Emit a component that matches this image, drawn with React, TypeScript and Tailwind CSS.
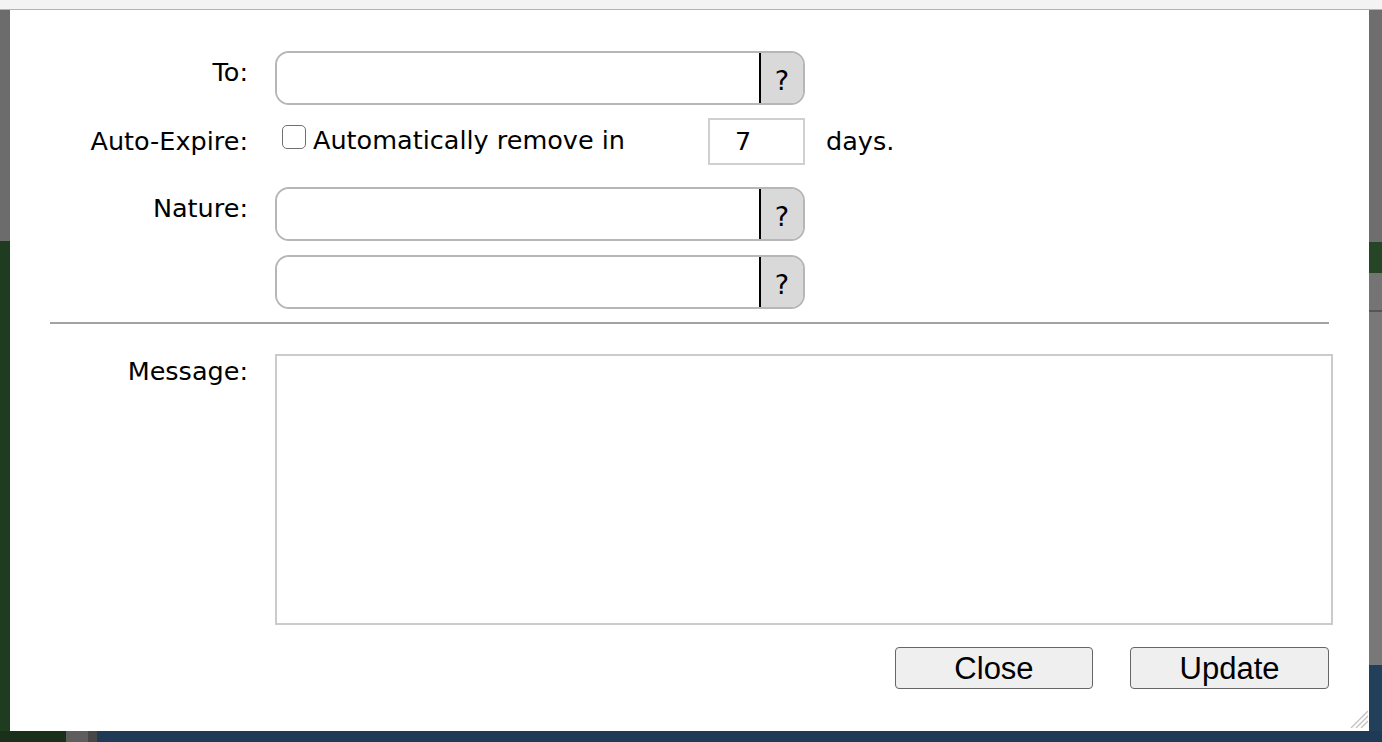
import React from "react";

const font = { fontFamily: '"DejaVu Sans", "Noto Sans", sans-serif' };

function Label({ text, mt }: { text: string; mt: string }) {
  return (
    <div
      className={`w-[238px] shrink-0 text-right text-[25.5px] leading-[30px] text-black ${mt}`}
      style={font}
    >
      {text}
    </div>
  );
}

function LookupField() {
  return (
    <div className="ml-[27px] flex h-[54px] w-[530px] overflow-hidden rounded-[14px] border-2 border-[#b6b6b6] bg-white">
      <div className="flex-1 bg-white" />
      <div
        className="flex w-[44px] items-center justify-center border-l-2 border-black bg-[#d9d9d9] pt-[4px] text-[27px] leading-none text-black"
        style={font}
      >
        ?
      </div>
    </div>
  );
}

export default function App() {
  return (
    <div className="flex h-[742px] w-[1382px] flex-col overflow-hidden bg-white">
      {/* top strip of the page behind */}
      <div className="h-[10px] shrink-0 border-b border-[#b3b3b3] bg-[#f3f3f3]" />

      <div className="flex h-[721px] shrink-0">
        {/* left edge of the page behind */}
        <div className="flex w-[10px] shrink-0 flex-col">
          <div className="h-[231px] bg-[#6c6c6c]" />
          <div className="flex-1 bg-[#203c20]" />
        </div>

        {/* dialog */}
        <div className="relative flex w-[1359px] shrink-0 flex-col bg-white pt-[41px]">
          {/* To */}
          <div className="flex h-[54px] items-start">
            <Label text="To:" mt="mt-[6px]" />
            <LookupField />
          </div>

          {/* Auto-Expire */}
          <div className="mt-[13px] flex h-[47px] items-start">
            <Label text="Auto-Expire:" mt="mt-[8px]" />
            <div className="ml-[27px] flex w-[433px] items-start">
              <div className="ml-[7px] mt-[7px] h-[24px] w-[24px] rounded-[5px] border-[1.5px] border-[#707070] bg-white" />
              <span
                className="ml-[7px] mt-[7px] text-[25.5px] leading-[30px] text-black"
                style={font}
              >
                Automatically remove in
              </span>
            </div>
            <div
              className="h-[47px] w-[97px] border-2 border-[#d0d0d0] pl-[25px] pt-[6px] text-[25.5px] leading-[30px] text-black"
              style={font}
            >
              7
            </div>
            <span
              className="ml-[21px] mt-[8px] text-[25.5px] leading-[30px] text-black"
              style={font}
            >
              days.
            </span>
          </div>

          {/* Nature */}
          <div className="mt-[22px] flex h-[54px] items-start">
            <Label text="Nature:" mt="mt-[6px]" />
            <LookupField />
          </div>

          <div className="mt-[14px] flex h-[54px] items-start">
            <div className="w-[238px] shrink-0" />
            <LookupField />
          </div>

          {/* separator */}
          <div className="mx-[40px] mt-[13px] h-[2px] bg-[#a3a3a3]" />

          {/* Message */}
          <div className="mt-[30px] flex items-start">
            <Label text="Message:" mt="mt-[2px]" />
            <div className="ml-[27px] h-[271px] w-[1058px] border-2 border-[#cbcbcb] bg-white" />
          </div>

          {/* buttons */}
          <div className="mt-[22px] flex justify-end gap-[37px] pr-[40px]">
            <button
              className="flex h-[42px] w-[198px] items-center justify-center rounded-[4px] border-[1.5px] border-[#666666] bg-[#efefef] text-[31px] leading-none text-black"
              style={{ fontFamily: '"Liberation Sans", Arial, sans-serif' }}
            >
              Close
            </button>
            <button
              className="flex h-[42px] w-[199px] items-center justify-center rounded-[4px] border-[1.5px] border-[#666666] bg-[#efefef] text-[31px] leading-none text-black"
              style={{ fontFamily: '"Liberation Sans", Arial, sans-serif' }}
            >
              Update
            </button>
          </div>

          {/* resize grip */}
          <svg
            className="absolute bottom-[3px] right-[1px]"
            width="20"
            height="20"
            viewBox="0 0 20 20"
          >
            <line x1="3" y1="20" x2="20" y2="3" stroke="#c2c2c2" strokeWidth="1.3" />
            <line x1="8" y1="20" x2="20" y2="8" stroke="#c2c2c2" strokeWidth="1.3" />
            <line x1="13" y1="20" x2="20" y2="13" stroke="#c2c2c2" strokeWidth="1.3" />
          </svg>
        </div>

        {/* right edge of the page behind */}
        <div className="flex flex-1 flex-col">
          <div className="h-[232px] bg-[#6e6e6e]" />
          <div className="h-[31px] bg-[#264526]" />
          <div className="h-[37px] bg-[#747474]" />
          <div className="h-[2px] bg-[#555555]" />
          <div className="h-[353px] bg-[#787878]" />
          <div className="flex-1 bg-[#23405b]" />
        </div>
      </div>

      {/* bottom strip of the page behind */}
      <div className="flex h-[11px] shrink-0">
        <div className="w-[66px] bg-[#1b301b]" />
        <div className="w-[22px] bg-[#5e5e5e]" />
        <div className="w-[9px] bg-[#474747]" />
        <div className="flex-1 bg-[#1e3a55]" />
      </div>
    </div>
  );
}
